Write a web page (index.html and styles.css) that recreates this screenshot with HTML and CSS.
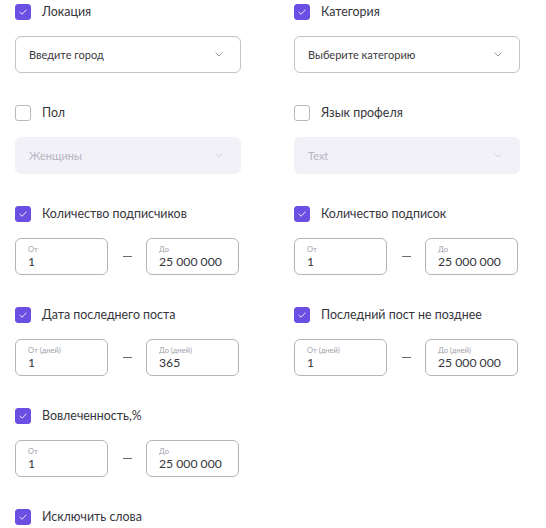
FILE: index.html
```html
<!DOCTYPE html>
<html lang="ru">
<head>
<meta charset="utf-8">
<link rel="stylesheet" href="styles.css">
</head>
<body>
<div class="form">
  <div class="group">
    <label class="check"><span class="box on"><svg viewBox="0 0 16 16"><path d="M4.5 8.2 L7 10.6 L11.6 5.6"/></svg></span><span class="lbl">Локация</span></label>
    <div class="select"><span>Введите город</span><svg class="chev" viewBox="0 0 8 5"><path d="M0.5 0.5 L4 4 L7.5 0.5"/></svg></div>
  </div>
  <div class="group">
    <label class="check"><span class="box on"><svg viewBox="0 0 16 16"><path d="M4.5 8.2 L7 10.6 L11.6 5.6"/></svg></span><span class="lbl">Категория</span></label>
    <div class="select"><span>Выберите категорию</span><svg class="chev" viewBox="0 0 8 5"><path d="M0.5 0.5 L4 4 L7.5 0.5"/></svg></div>
  </div>

  <div class="group">
    <label class="check"><span class="box"></span><span class="lbl">Пол</span></label>
    <div class="select disabled"><span>Женщины</span><svg class="chev" viewBox="0 0 8 5"><path d="M0.5 0.5 L4 4 L7.5 0.5"/></svg></div>
  </div>
  <div class="group">
    <label class="check"><span class="box"></span><span class="lbl">Язык профеля</span></label>
    <div class="select disabled"><span>Text</span><svg class="chev" viewBox="0 0 8 5"><path d="M0.5 0.5 L4 4 L7.5 0.5"/></svg></div>
  </div>

  <div class="group">
    <label class="check"><span class="box on"><svg viewBox="0 0 16 16"><path d="M4.5 8.2 L7 10.6 L11.6 5.6"/></svg></span><span class="lbl">Количество подписчиков</span></label>
    <div class="range">
      <div class="field"><span class="cap">От</span><span class="val">1</span></div>
      <span class="dash"></span>
      <div class="field"><span class="cap">До</span><span class="val">25 000 000</span></div>
    </div>
  </div>
  <div class="group">
    <label class="check"><span class="box on"><svg viewBox="0 0 16 16"><path d="M4.5 8.2 L7 10.6 L11.6 5.6"/></svg></span><span class="lbl">Количество подписок</span></label>
    <div class="range">
      <div class="field"><span class="cap">От</span><span class="val">1</span></div>
      <span class="dash"></span>
      <div class="field"><span class="cap">До</span><span class="val">25 000 000</span></div>
    </div>
  </div>

  <div class="group">
    <label class="check"><span class="box on"><svg viewBox="0 0 16 16"><path d="M4.5 8.2 L7 10.6 L11.6 5.6"/></svg></span><span class="lbl">Дата последнего поста</span></label>
    <div class="range">
      <div class="field"><span class="cap">От (дней)</span><span class="val">1</span></div>
      <span class="dash"></span>
      <div class="field"><span class="cap">До (дней)</span><span class="val">365</span></div>
    </div>
  </div>
  <div class="group">
    <label class="check"><span class="box on"><svg viewBox="0 0 16 16"><path d="M4.5 8.2 L7 10.6 L11.6 5.6"/></svg></span><span class="lbl">Последний пост не позднее</span></label>
    <div class="range">
      <div class="field"><span class="cap">От (дней)</span><span class="val">1</span></div>
      <span class="dash"></span>
      <div class="field"><span class="cap">До (дней)</span><span class="val">25 000 000</span></div>
    </div>
  </div>

  <div class="group">
    <label class="check"><span class="box on"><svg viewBox="0 0 16 16"><path d="M4.5 8.2 L7 10.6 L11.6 5.6"/></svg></span><span class="lbl">Вовлеченность,%</span></label>
    <div class="range">
      <div class="field"><span class="cap">От</span><span class="val">1</span></div>
      <span class="dash"></span>
      <div class="field"><span class="cap">До</span><span class="val">25 000 000</span></div>
    </div>
  </div>
  <div class="group"></div>

  <div class="group">
    <label class="check"><span class="box on"><svg viewBox="0 0 16 16"><path d="M4.5 8.2 L7 10.6 L11.6 5.6"/></svg></span><span class="lbl">Исключить слова</span></label>
  </div>
</div>
</body>
</html>
```

FILE: styles.css
```css
* { box-sizing: border-box; }
html, body { margin: 0; padding: 0; background: #fff; }
body {
  font-family: Lato, "Noto Sans", sans-serif;
  font-weight: 400;
  color: #34333a;
  overflow: hidden;
}
.form {
  display: grid;
  grid-template-columns: 226px 226px;
  column-gap: 53px;
  row-gap: 32px;
  padding: 4px 0 0 15px;
}
.group {
  display: flex;
  flex-direction: column;
  gap: 16px;
}
.check {
  display: flex;
  align-items: center;
  height: 16px;
  gap: 11px;
}
.box {
  width: 16px;
  height: 16px;
  border-radius: 3px;
  border: 1px solid #b9b8c2;
  background: #fff;
  flex: none;
  display: flex;
}
.box.on {
  background: #6b4ee2;
  border-color: #6b4ee2;
}
.box svg { width: 14px; height: 14px; }
.box path { fill: none; stroke: #fff; stroke-width: 1; stroke-linecap: round; stroke-linejoin: round; }
.lbl {
  font-size: 12.4px;
  line-height: 16px;
  white-space: nowrap;
  color: #36353c;
}
.select {
  height: 37px;
  border: 1px solid #c3c2cb;
  border-radius: 6px;
  display: flex;
  align-items: center;
  justify-content: space-between;
  padding: 0 17px 0 13px;
  font-size: 11px;
  color: #3a3940;
}
.select.disabled {
  background: #f2f1f8;
  border-color: #f2f1f8;
  color: #b5b4c0;
}
.chev { width: 8px; height: 5px; }
.chev path { fill: none; stroke: #8e8d98; stroke-width: 0.9; }
.select.disabled .chev path { stroke: #cfceda; }
.range {
  display: flex;
  align-items: center;
  width: 224px;
}
.field {
  width: 93px;
  height: 37px;
  border: 1px solid #b5b4bd;
  border-radius: 6px;
  display: flex;
  flex-direction: column;
  justify-content: center;
  padding: 0 12px;
  white-space: nowrap;
}
.cap {
  font-size: 7.5px;
  line-height: 9px;
  color: #a09fa9;
}
.val {
  font-size: 12.2px;
  line-height: 15px;
  color: #36353c;
}
.dash {
  width: 9px;
  height: 1px;
  background: #6b6a72;
  margin: 0 auto;
}
```
